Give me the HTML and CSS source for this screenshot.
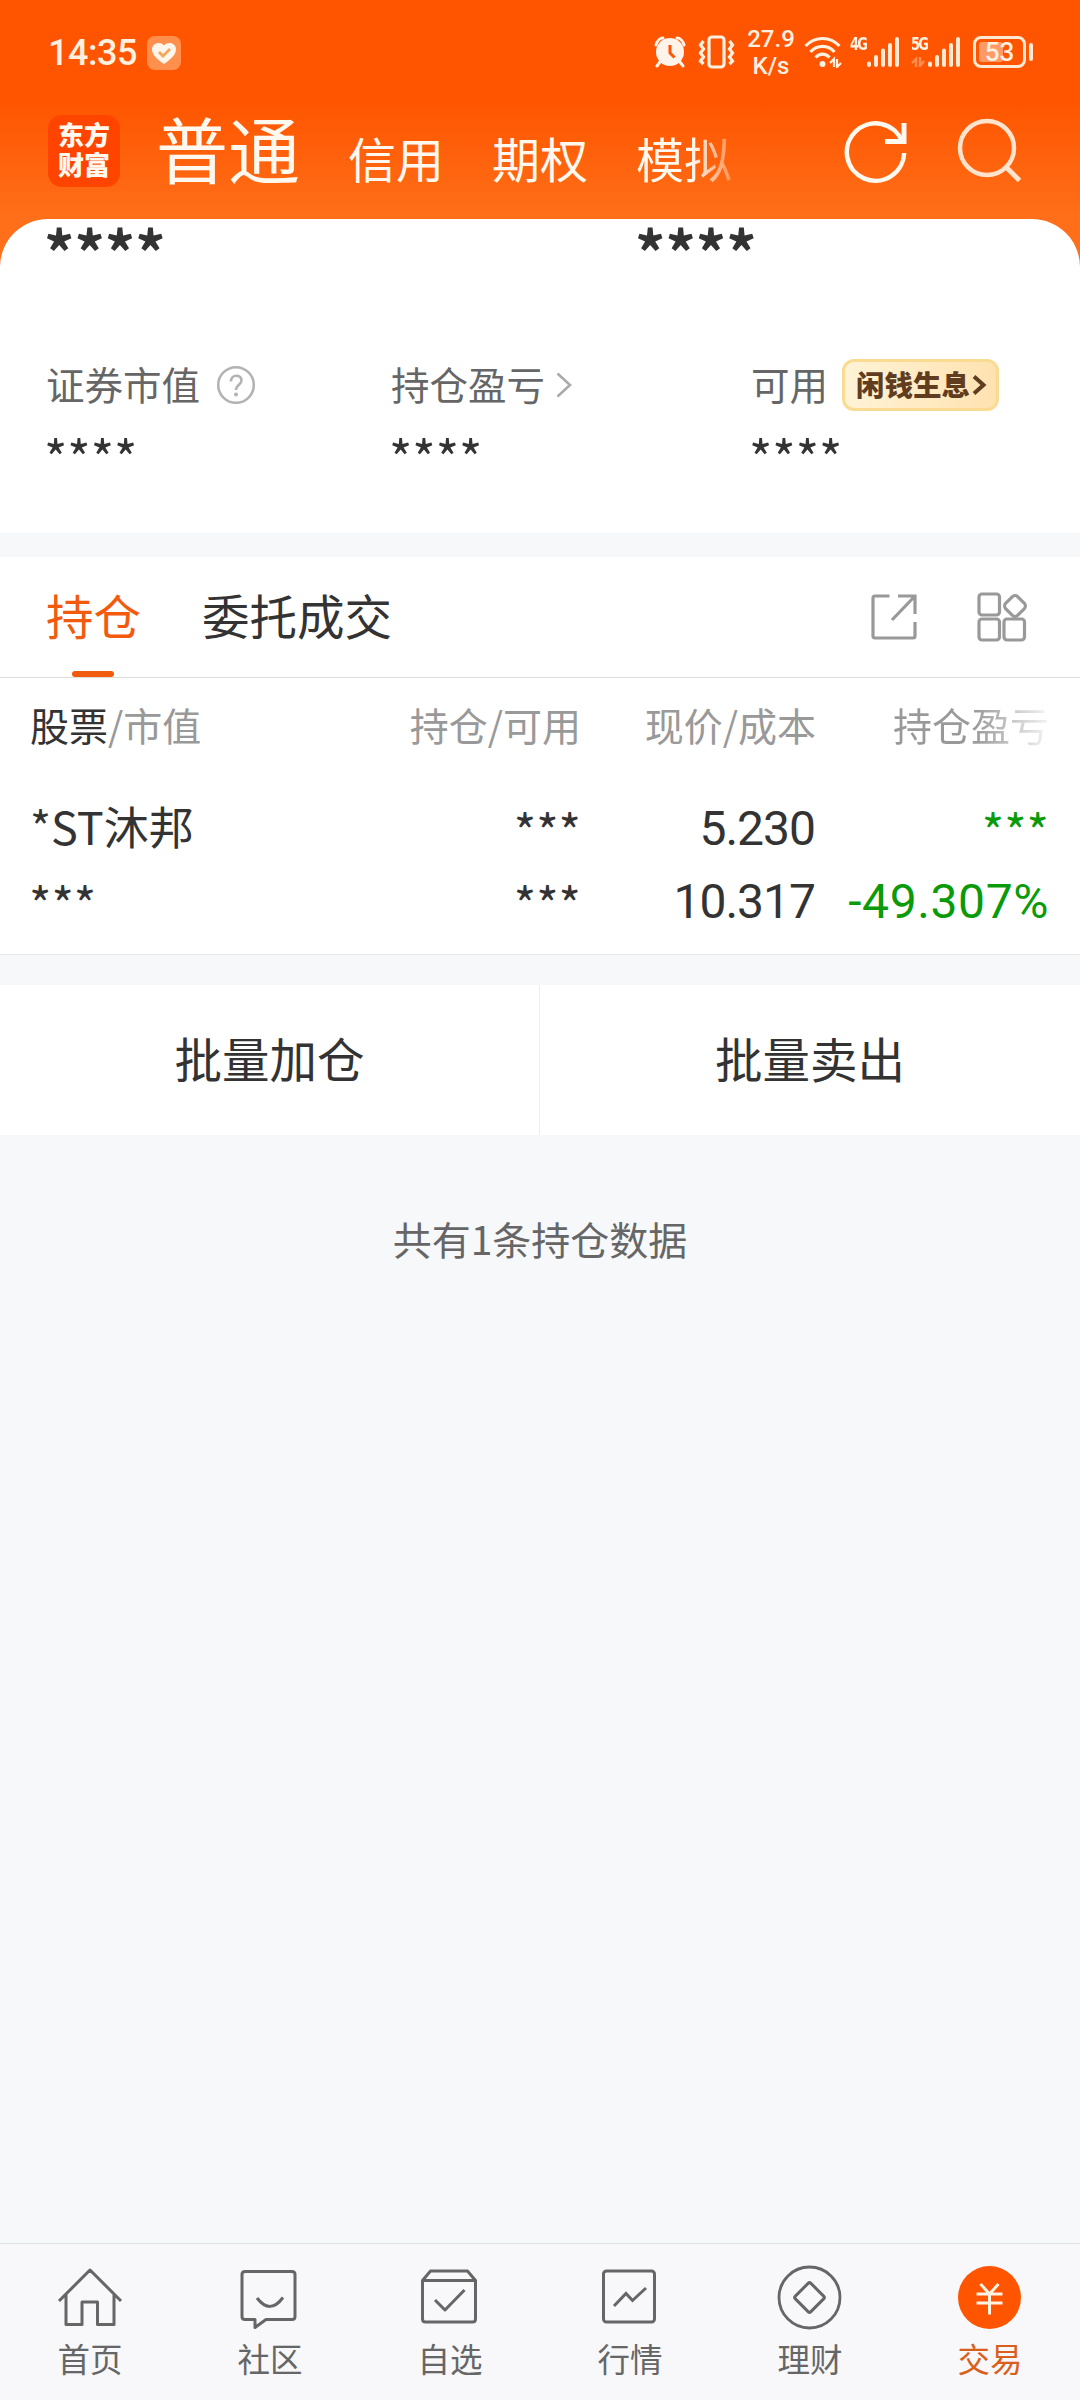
FILE: index.html
```html
<!DOCTYPE html>
<html lang="zh-CN">

<head>
    <meta charset="UTF-8">
    <meta name="viewport" content="width=device-width, initial-scale=1.0">
    <title>交易 - 持仓</title>
    <link rel="stylesheet" href="styles.css">
</head>

<body>
    <div class="status-bar">
        <span class="time">14:35</span>
        <svg class="health" width="34" height="34" viewBox="0 0 34 34">
            <rect width="34" height="34" rx="8" fill="#ff8f4c"/>
            <path d="M17 28C11 24 5 19 5 13.500C5 7 13 5 17 9.500C21 5 29 7 29 13.500C29 19 23 24 17 28Z" fill="#fff5ea"/>
            <path d="M12 16l4 4 7-7" fill="none" stroke="#f3a75c" stroke-width="2.800"/>
        </svg>
        <div class="status-icons">
            <svg class="alarm" width="32" height="32" viewBox="0 0 32 32">
                <circle cx="16" cy="16" r="14" fill="#fff3ea"/>
                <path d="M2 9C3 5 6 2 9 2M23 2C26 2 29 5 30 9M6 26l-3 4M26 26l3 4" fill="none" stroke="#fff3ea" stroke-width="3" stroke-linecap="round"/>
                <path d="M16 9v8l4.500 4.500" fill="none" stroke="#ff5500" stroke-width="3"/>
            </svg>
            <svg class="vibrate" width="38" height="34" viewBox="0 0 38 34">
                <rect x="11" y="2" width="15" height="30" rx="3" fill="none" stroke="#fff0e0" stroke-width="3.200"/>
                <path d="M5.500 6l-3 4 3 4-3 4 3 4-3 4 3 3M31.500 6l3 4-3 4 3 4-3 4 3 4-3 3" fill="none" stroke="#fff0e0" stroke-width="3.200"/>
            </svg>
            <div class="speed"><span>27.9</span><span>K/s</span></div>
            <svg class="wifi" width="38" height="32" viewBox="0 0 38 32">
                <path d="M1.500 10C11 0 26 0 35.500 10M6.500 16C13 8.500 24 8.500 30.500 16M11.500 21.500C15.500 17 21.500 17 25.500 21.500" fill="none" stroke="#fff0e0" stroke-width="3.200"/>
                <circle cx="18.500" cy="28" r="3" fill="#fff0e0"/>
                <path d="M26 27l4-4v8M37 27l-4 4v-8" fill="none" stroke="#fff0e0" stroke-width="2.200"/>
            </svg>
            <div class="signal">
                <span>4G</span>
                <svg width="33" height="32" viewBox="0 0 33 32">
                    <path d="M2 27.500V29M9 21v8M16 14.500V29M23 9v20M30 3v26" stroke="#ffe9d2" stroke-width="4" stroke-linecap="round"/>
                </svg>
            </div>
            <div class="signal signal-5g">
                <span>5G</span>
                <svg class="data" width="14" height="10" viewBox="0 0 14 10"><path d="M1 6l4-4v8M13 4l-4 5V0" fill="none" stroke="#ff8f55" stroke-width="2.400"/></svg>
                <svg width="33" height="32" viewBox="0 0 33 32">
                    <path d="M2 27.500V29M9 21v8M16 14.500V29M23 9v20M30 3v26" stroke="#ffe9d2" stroke-width="4" stroke-linecap="round"/>
                </svg>
            </div>
            <div class="battery"><i></i><span>53</span></div>
        </div>
    </div>

    <header class="top-nav">
        <div class="logo">东方财富</div>
        <nav class="account-tabs">
            <a class="current">普通</a>
            <a>信用</a>
            <a>期权</a>
            <a class="fade">模拟</a>
        </nav>
        <svg class="refresh" width="64" height="66" viewBox="0 0 64 66">
            <path d="M60.200 34A28.700 28.700 0 1 1 58 22" fill="none" stroke="#fff8ee" stroke-width="4.500"/>
            <path d="M60 4v18.500H41" fill="none" stroke="#fff8ee" stroke-width="5"/>
        </svg>
        <svg class="search" width="66" height="66" viewBox="0 0 66 66">
            <circle cx="30" cy="30" r="27" fill="none" stroke="#ffe3cc" stroke-width="4.500"/>
            <path d="M49 49l13.500 13.500" stroke="#ffe3cc" stroke-width="5"/>
        </svg>
    </header>

    <main>
        <section class="assets">
            <div class="totals">
                <b>****</b>
                <b>****</b>
            </div>
            <div class="asset-list">
                <div class="asset">
                    <div class="label"><span>证券市值</span>
                        <svg class="help" width="40" height="40" viewBox="0 0 40 40">
                            <circle cx="20" cy="20" r="17.800" fill="none" stroke="#b3b3b3" stroke-width="2.600"/>
                            <path d="M15 16.500C15 9 25.500 9 25.500 15.500C25.500 20 20 19.500 20 25" fill="none" stroke="#b3b3b3" stroke-width="2.600"/>
                            <circle cx="20" cy="29.500" r="2" fill="#b3b3b3"/>
                        </svg>
                    </div>
                    <div class="value">****</div>
                </div>
                <div class="asset">
                    <div class="label"><span>持仓盈亏</span>
                        <svg class="arrow" width="18" height="28" viewBox="0 0 18 28"><path d="M2.500 2.500L15 14 2.500 25.500" fill="none" stroke="#aaa" stroke-width="2.600"/></svg>
                    </div>
                    <div class="value">****</div>
                </div>
                <div class="asset">
                    <div class="label"><span>可用</span>
                        <div class="promo">闲钱生息<svg width="15" height="22" viewBox="0 0 15 22"><path d="M2 2.500l9.500 8.500L2 19.500" fill="none" stroke="#603c20" stroke-width="4"/></svg></div>
                    </div>
                    <div class="value">****</div>
                </div>
            </div>
        </section>

        <section class="positions">
            <div class="tabs">
                <a class="active">持仓</a>
                <a>委托成交</a>
                <svg class="export" width="48" height="48" viewBox="0 0 48 48">
                    <path d="M19.500 3H5Q3 3 3 5v38q0 2 2 2h38q2 0 2-2V29M28 3h17v18M45 3L22 27" fill="none" stroke="#999" stroke-width="3.200"/>
                </svg>
                <svg class="widgets" width="50" height="50" viewBox="0 0 50 50" fill="none" stroke="#999" stroke-width="3.200">
                    <rect x="2" y="2" width="20.500" height="21" rx="3"/>
                    <rect x="2" y="27" width="20.500" height="21" rx="3"/>
                    <rect x="27" y="27" width="20.500" height="21" rx="3"/>
                    <rect x="29.500" y="5.500" width="17" height="17" rx="4" transform="rotate(45 38 14)"/>
                </svg>
            </div>
            <div class="row table-head">
                <span><em>股票</em>/市值</span>
                <span>持仓/可用</span>
                <span>现价/成本</span>
                <span class="fade-head">持仓盈亏</span>
            </div>
            <div class="row">
                <span>*ST沐邦</span>
                <span class="stars">***</span>
                <span class="num">5.230</span>
                <span class="stars down">***</span>
            </div>
            <div class="row">
                <span class="stars">***</span>
                <span class="stars">***</span>
                <span class="num">10.317</span>
                <span class="num down">-49.307%</span>
            </div>
        </section>

        <div class="batch">
            <a>批量加仓</a>
            <a>批量卖出</a>
        </div>
        <p class="summary">共有1条持仓数据</p>
    </main>

    <footer class="tab-bar">
        <a>
            <svg width="66" height="66" viewBox="0 0 66 66">
                <path d="M2 36L33 5l31 31M9 29v30.500h16V37h15.500v22.500H57V29" fill="none" stroke="#666" stroke-width="3" stroke-linejoin="round"/>
            </svg>
            首页
        </a>
        <a>
            <svg width="66" height="66" viewBox="0 0 66 66">
                <path d="M8 6.500h47q3 0 3 3v42q0 3-3 3H29L18 62.500V54.500H8q-3 0-3-3v-42q0-3 3-3ZM20 33q13 17 26-.500" fill="none" stroke="#666" stroke-width="3" stroke-linejoin="round"/>
            </svg>
            社区
        </a>
        <a>
            <svg width="66" height="66" viewBox="0 0 66 66">
                <path d="M5.500 15.500L13.500 6h37L58.500 15.500V54q0 3-3 3h-47q-3 0-3-3ZM5.500 15.500h53M18 35l10 10 19.500-20" fill="none" stroke="#666" stroke-width="3" stroke-linejoin="round"/>
            </svg>
            自选
        </a>
        <a>
            <svg width="66" height="66" viewBox="0 0 66 66">
                <rect x="6.500" y="6" width="51" height="51" rx="3" fill="none" stroke="#666" stroke-width="3"/>
                <path d="M17 41l12-12.500 6.500 7L49 23" fill="none" stroke="#666" stroke-width="3"/>
            </svg>
            行情
        </a>
        <a>
            <svg width="66" height="66" viewBox="0 0 66 66">
                <circle cx="32.500" cy="32.500" r="30.500" fill="none" stroke="#666" stroke-width="2.800"/>
                <rect x="21.500" y="21.500" width="22" height="22" rx="2" transform="rotate(45 32.500 32.500)" fill="none" stroke="#666" stroke-width="3"/>
            </svg>
            理财
        </a>
        <a class="active">
            <svg width="66" height="66" viewBox="0 0 66 66">
                <circle cx="32.500" cy="32.500" r="31.500" fill="#ff5500"/>
                <path d="M23.500 19l9 10 9-10M19.500 29h26M19.500 38h26M32.500 29v20.500" fill="none" stroke="#fff3e4" stroke-width="3"/>
            </svg>
            交易
        </a>
    </footer>
</body>

</html>
```

FILE: styles.css
```css
* {
    box-sizing: border-box;
}

body {
    display: flex;
    flex-direction: column;
    width: 1080px;
    height: 2400px;
    margin: 0;
    font-family: "Noto Sans CJK SC", sans-serif;
    color: #333;
    background: #f7f8fa linear-gradient(#ff5500 100px, #ff6e18 215px, #ff6e18 270px) no-repeat 0 0 / 100% 270px;
}

svg {
    display: block;
    flex: none;
}

/* status bar */
.status-bar {
    display: flex;
    align-items: center;
    height: 104px;
    padding: 0 47px 0 48px;
    font-family: Roboto, sans-serif;
    color: #fff0e0;
}

.time {
    width: 99px;
    margin-top: 1px;
    font-size: 36px;
    font-weight: 500;
    letter-spacing: -0.5px;
}

.health {
    margin-top: 2px;
}

.status-icons {
    display: flex;
    align-items: center;
    margin-left: auto;
}

.vibrate {
    margin-left: 12px;
}

.speed {
    display: flex;
    flex-direction: column;
    align-items: center;
    width: 54px;
    margin: 2px 6px 0 8px;
    font-size: 24px;
    font-weight: 500;
    line-height: 27px;
}

.wifi {
    margin-right: 8px;
}

.signal {
    display: flex;
    position: relative;
    width: 50px;
    margin-right: 11px;
}

.signal span {
    width: 17px;
    font-family: "DejaVu Sans Condensed", sans-serif;
    font-size: 17px;
    font-weight: bold;
    line-height: 16px;
    letter-spacing: -2px;
    transform: scaleX(0.85);
    transform-origin: left;
}

.signal-5g {
    margin-right: 12px;
}

.signal .data {
    position: absolute;
    left: 0;
    bottom: 1px;
}

.battery {
    position: relative;
    width: 53px;
    height: 32px;
    margin-right: 7px;
    border: 3px solid #ffe9d2;
    border-radius: 8px;
    font-size: 26px;
    font-weight: 500;
    line-height: 27px;
    text-align: center;
}

.battery i {
    position: absolute;
    left: 3px;
    top: 3px;
    width: 24px;
    height: 20px;
    border-radius: 3px;
    background: #ff9a66;
}

.battery span {
    position: relative;
}

.battery::after {
    content: "";
    position: absolute;
    right: -10px;
    top: 4px;
    width: 4px;
    height: 18px;
    border-radius: 2px;
    background: #ffe9d2;
}

/* account nav */
.top-nav {
    display: flex;
    height: 115px;
    padding: 0 57px 0 48px;
    color: #fff8ee;
}

.logo {
    width: 72px;
    height: 72px;
    margin-top: 11px;
    padding: 4px 8px 0 10px;
    border-radius: 14px;
    background: #ff4400;
    font-size: 26px;
    font-weight: 900;
    line-height: 30px;
}

.account-tabs {
    display: flex;
    align-items: baseline;
    gap: 48px;
    height: 100px;
    margin-left: 36px;
    font-size: 48px;
    line-height: 85px;
}

.account-tabs .current {
    font-size: 72px;
}

.account-tabs .fade {
    background: linear-gradient(90deg, #fff8ee 58%, rgba(255, 248, 238, 0.3) 100%);
    background-clip: text;
    -webkit-background-clip: text;
    color: transparent;
}

.refresh {
    margin: 15px 0 0 auto;
}

.search {
    margin: 14px 0 0 49px;
}

/* assets */
.assets {
    height: 314px;
    border-radius: 48px 48px 0 0;
    background: #fff;
}

.totals {
    display: grid;
    grid-template-columns: 591px 1fr;
    height: 136px;
    padding-left: 44px;
    font-size: 60px;
    line-height: 61px;
}

.asset-list {
    display: grid;
    grid-template-columns: 345px 360px 1fr;
    padding-left: 46px;
}

.label {
    display: flex;
    align-items: center;
    height: 60px;
    font-size: 38.5px;
    color: #666;
}

.label span {
    margin-top: -4px;
}

.help {
    margin-left: 16px;
}

.arrow {
    margin-left: 10px;
}

.value {
    margin-left: -2px;
    font-size: 50px;
    line-height: 83px;
}

.promo {
    display: flex;
    align-items: center;
    width: 157px;
    height: 52px;
    margin-left: 14px;
    padding: 0 0 3px 11px;
    border: 3px solid #f9dc92;
    border-radius: 12px;
    background: linear-gradient(90deg, #fff3d6, #ffe2b0);
    font-size: 28.5px;
    font-weight: 900;
    color: #603c20;
}

.promo svg {
    margin: 3px 0 0 2px;
}

/* positions */
.positions {
    height: 398px;
    margin-top: 24px;
    border-bottom: 1px solid #e8e8e8;
    background: #fff;
}

.tabs {
    display: flex;
    align-items: center;
    height: 121px;
    padding: 0 53px 0 46px;
    border-bottom: 1px solid #ddd;
    font-size: 47.5px;
}

.tabs a {
    position: relative;
    height: 120px;
    margin-right: 61px;
    line-height: 116px;
}

.tabs .active {
    color: #f25a0e;
}

.tabs .active::after {
    content: "";
    position: absolute;
    left: 26px;
    bottom: 0;
    width: 42px;
    height: 6px;
    border-radius: 3px;
    background: #f25a0e;
}

.export {
    margin-left: auto;
}

.widgets {
    margin-left: 59px;
}

.row {
    display: grid;
    grid-template-columns: 300px 250px 235px 233px;
    height: 73px;
    padding-left: 30px;
    font-size: 45px;
    line-height: 72px;
    text-align: right;
}

.row span {
    margin-right: -1px;
}

.row span:first-child {
    text-align: left;
}

.table-head {
    height: 112px;
    font-size: 39px;
    line-height: 92px;
    color: #999;
}

.table-head em {
    font-style: normal;
    color: #333;
}

.fade-head {
    background: linear-gradient(90deg, #999 68%, #f4f4f4 100%);
    background-clip: text;
    -webkit-background-clip: text;
    color: transparent;
}

.row .stars {
    font-size: 48px;
    line-height: 78px;
}

.row .stars:first-child {
    margin-left: -1px;
}

.row .num {
    margin-right: 0;
    font-family: Roboto, sans-serif;
    font-size: 48px;
    line-height: 78px;
    letter-spacing: -1px;
}

.row .down {
    color: #0a9a0a;
}

.row .num.down {
    margin-right: -1px;
    letter-spacing: 0.6px;
}

/* batch actions */
.batch {
    display: grid;
    grid-template-columns: 1fr 1fr;
    height: 150px;
    margin-top: 30px;
    background: #fff;
    font-size: 47.5px;
    line-height: 146px;
    text-align: center;
}

.batch a:first-child {
    border-right: 1px solid #eee;
}

.summary {
    margin: 0;
    font-size: 39px;
    line-height: 206px;
    text-align: center;
    color: #666;
}

/* bottom tab bar */
.tab-bar {
    display: grid;
    grid-template-columns: repeat(6, 1fr);
    height: 157px;
    margin-top: auto;
    padding-top: 21px;
    border-top: 1px solid #e3e3e3;
    background: #f8f8fa;
}

.tab-bar a {
    display: flex;
    flex-direction: column;
    align-items: center;
    font-size: 32.5px;
    line-height: 53px;
    color: #666;
}

.tab-bar .active {
    color: #d9601c;
}
```
